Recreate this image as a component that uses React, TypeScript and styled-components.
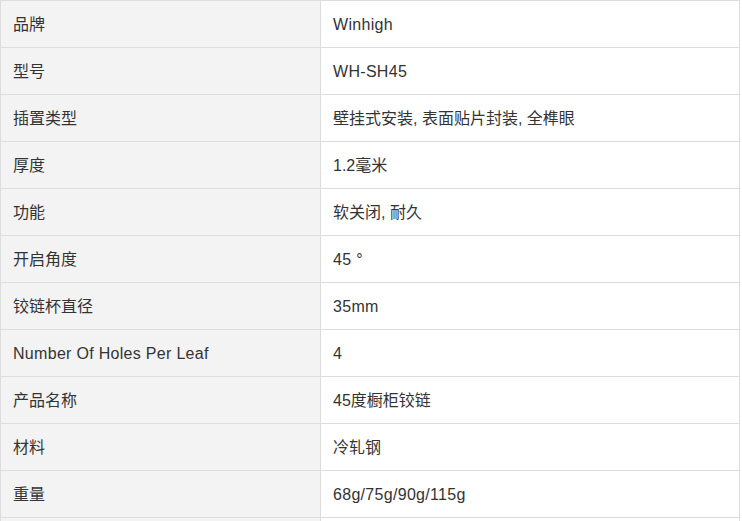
import React from "react";
import styled, { createGlobalStyle } from "styled-components";

const Global = createGlobalStyle`
  html, body {
    margin: 0;
    padding: 0;
    background: #ffffff;
  }
  body {
    font-family: "Liberation Sans", Arial, "Noto Sans CJK SC", sans-serif;
    color: #333333;
  }
`;

const Table = styled.div`
  display: grid;
  grid-template-columns: 320px 419px;
  width: 740px;
  border-top: 1px solid #dddddd;
  border-left: 1px solid #dddddd;
  box-sizing: border-box;
`;

const Cell = styled.div<{ $label?: boolean; $latin?: boolean }>`
  height: 46px;
  box-sizing: border-box;
  height: 47px;
  padding: 1px 12px 0;
  display: flex;
  align-items: center;
  border-right: 1px solid #dddddd;
  border-bottom: 1px solid #dddddd;
  background: ${(p) => (p.$label ? "#f3f3f3" : "#ffffff")};
  font-size: 16px;
  line-height: 22px;
  letter-spacing: ${(p) => (p.$latin ? "0.3px" : "0")};
  color: #333333;
  white-space: nowrap;
  min-width: 0;
`;

const rows: [string, string][] = [
  ["品牌", "Winhigh"],
  ["型号", "WH-SH45"],
  ["插置类型", "壁挂式安装, 表面贴片封装, 全榫眼"],
  ["厚度", "1.2毫米"],
  ["功能", "软关闭, 耐久"],
  ["开启角度", "45 °"],
  ["铰链杯直径", "35mm"],
  ["Number Of Holes Per Leaf", "4"],
  ["产品名称", "45度橱柜铰链"],
  ["材料", "冷轧钢"],
  ["重量", "68g/75g/90g/115g"],
  ["包装", "纸箱"],
];

const isLatin = (s: string) => !/[\u3000-\u9fff]/.test(s);

export default function App() {
  return (
    <>
      <Global />
      <Table>
        {rows.map(([k, v]) => (
          <React.Fragment key={k}>
            <Cell $label $latin={isLatin(k)}>
              {k}
            </Cell>
            <Cell $latin={isLatin(v)}>{v}</Cell>
          </React.Fragment>
        ))}
      </Table>
    </>
  );
}
